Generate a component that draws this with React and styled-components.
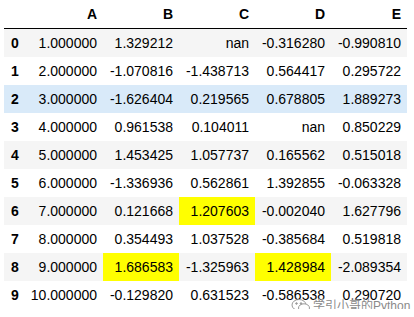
import React from "react";
import styled, { createGlobalStyle } from "styled-components";

const GlobalStyle = createGlobalStyle`
  html, body {
    margin: 0;
    background: #fff;
  }
  body {
    font-family: "Liberation Sans", Arial, sans-serif;
    font-size: 14px;
    color: #000;
  }
`;

const columns = ["A", "B", "C", "D", "E"];
const colWidths = [21, 78, 76, 76, 76, 76];

const rows = [
  ["1.000000", "1.329212", "nan", "-0.316280", "-0.990810"],
  ["2.000000", "-1.070816", "-1.438713", "0.564417", "0.295722"],
  ["3.000000", "-1.626404", "0.219565", "0.678805", "1.889273"],
  ["4.000000", "0.961538", "0.104011", "nan", "0.850229"],
  ["5.000000", "1.453425", "1.057737", "0.165562", "0.515018"],
  ["6.000000", "-1.336936", "0.562861", "1.392855", "-0.063328"],
  ["7.000000", "0.121668", "1.207603", "-0.002040", "1.627796"],
  ["8.000000", "0.354493", "1.037528", "-0.385684", "0.519818"],
  ["9.000000", "1.686583", "-1.325963", "1.428984", "-2.089354"],
  ["10.000000", "-0.129820", "0.631523", "-0.586538", "0.290720"],
];

// cells highlighted as the max of each column
const highlighted = { "6-2": true, "8-1": true, "8-3": true };

const Page = styled.div`
  position: relative;
  padding-left: 4px;
`;

const Table = styled.table`
  border-collapse: collapse;
  table-layout: fixed;
  width: 403px;
  border-spacing: 0;
`;

const Col = styled.col`
  width: ${(p) => p.$w}px;
`;

const HeadCell = styled.th`
  height: 28px;
  padding: 0 6px 0 0;
  text-align: right;
  font-weight: bold;
  border-bottom: 1px solid #000;
  vertical-align: middle;
`;

const Row = styled.tr`
  background: ${(p) => (p.$hover ? "#d9eaf9" : p.$striped ? "#f5f5f5" : "#fff")};
`;

const IndexCell = styled.th`
  height: 28px;
  padding: 0 0 0 7px;
  text-align: left;
  font-weight: bold;
  vertical-align: middle;
`;

const Cell = styled.td`
  height: 28px;
  padding: 0 6px 0 0;
  text-align: right;
  white-space: nowrap;
  vertical-align: middle;
  background: ${(p) => (p.$max ? "#ffff00" : "transparent")};
`;

const Watermark = styled.div`
  position: absolute;
  left: 291px;
  top: 298px;
  display: flex;
  align-items: center;
  gap: 2px;
  color: #8a8a8a;
  font-size: 12px;
  line-height: 16px;
  font-family: "Liberation Sans", "Noto Sans CJK SC", sans-serif;
  text-shadow: 0 0 2px #fff, 0 0 2px #fff, 0 0 1px #fff;
  white-space: nowrap;
`;

const WechatIcon = () => (
  <svg width="20" height="16" viewBox="0 0 20 16" fill="none" stroke="#9a9a9a" strokeWidth="1">
    <ellipse cx="8" cy="7" rx="7" ry="5.5" />
    <ellipse cx="13" cy="10" rx="5.5" ry="4.2" fill="#fff" />
    <circle cx="5.5" cy="5.5" r="0.8" fill="#9a9a9a" />
    <circle cx="10" cy="5.5" r="0.8" fill="#9a9a9a" />
  </svg>
);

export default function App() {
  return (
    <Page>
      <GlobalStyle />
      <Table>
        <colgroup>
          {colWidths.map((w, i) => (
            <Col key={i} $w={w} />
          ))}
        </colgroup>
        <thead>
          <tr>
            <HeadCell />
            {columns.map((c) => (
              <HeadCell key={c}>{c}</HeadCell>
            ))}
          </tr>
        </thead>
        <tbody>
          {rows.map((r, i) => (
            <Row key={i} $striped={i % 2 === 0} $hover={i === 2}>
              <IndexCell>{i}</IndexCell>
              {r.map((v, j) => (
                <Cell key={j} $max={highlighted[`${i}-${j}`]}>
                  {v}
                </Cell>
              ))}
            </Row>
          ))}
        </tbody>
      </Table>
      <Watermark>
        <WechatIcon />
        <span>学引小哥的Python</span>
      </Watermark>
    </Page>
  );
}
